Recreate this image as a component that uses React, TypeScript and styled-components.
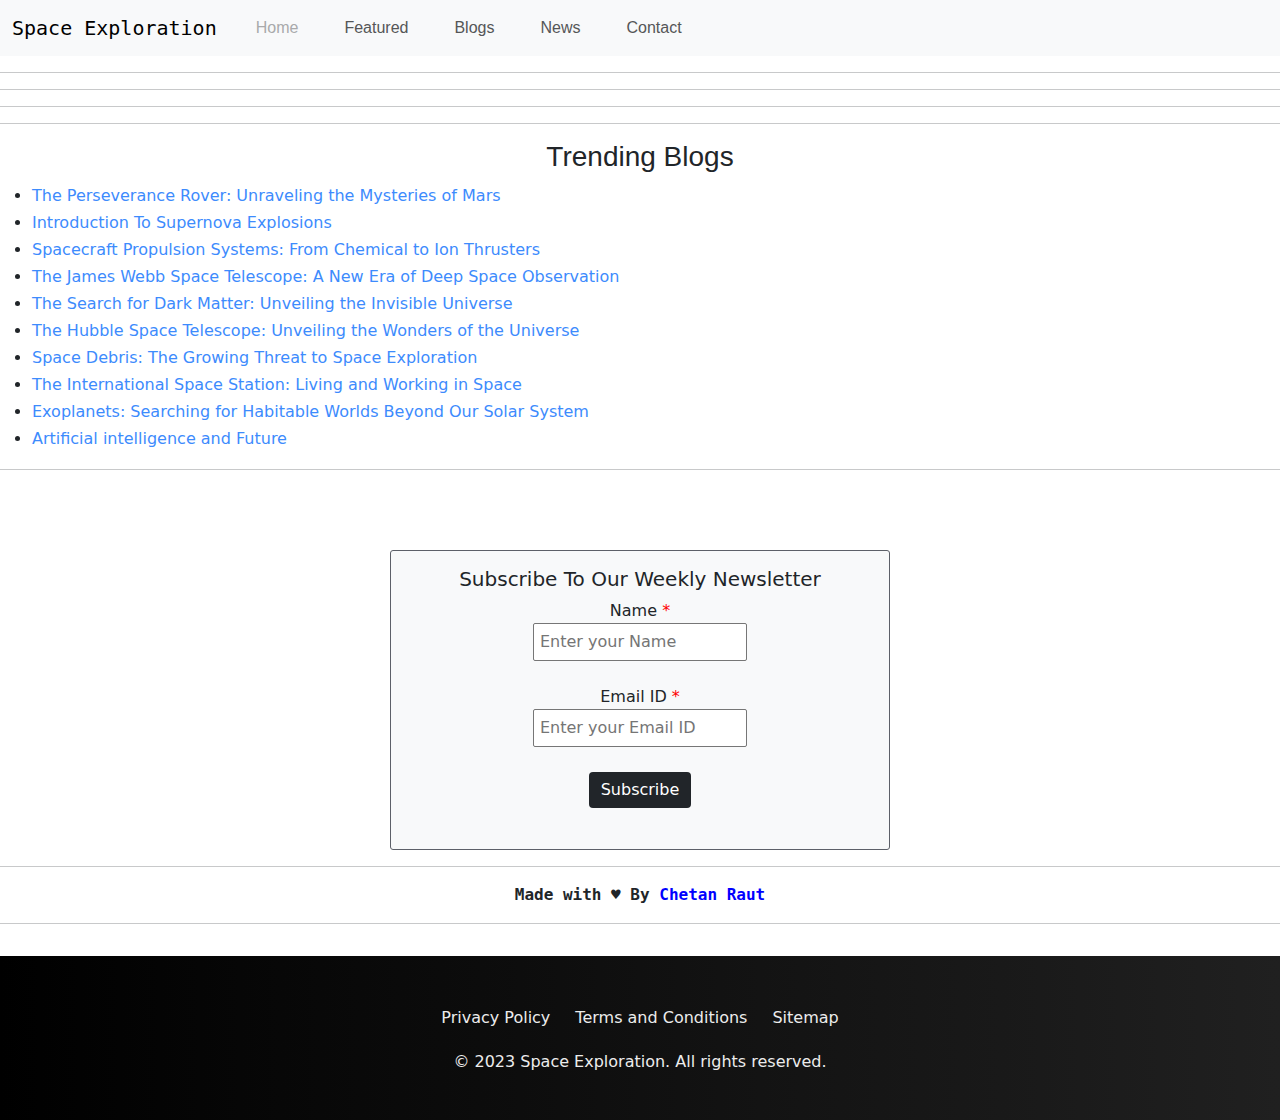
import React from "react";
import styled, { createGlobalStyle } from "styled-components";

const Global = createGlobalStyle`
  * { box-sizing: border-box; }
  html, body { margin: 0; padding: 0; }
  body {
    font-family: "DejaVu Sans", "Noto Sans", sans-serif;
    font-size: 16px;
    line-height: 1.5;
    color: #212529;
    background: #fff;
  }
`;

const NavBar = styled.nav`
  height: 56px;
  background: #f8f9fa;
  display: flex;
  align-items: center;
  padding: 0 12px;
`;

const Brand = styled.a`
  font-family: "DejaVu Sans Mono", monospace;
  font-size: 20px;
  color: #000;
  text-decoration: none;
  margin-right: 16px;
`;

const NavLink = styled.a<{ $active?: boolean }>`
  font-family: "Liberation Sans", Arial, sans-serif;
  font-size: 16px;
  padding: 0 23px;
  color: ${(p) => (p.$active ? "#a9aaab" : "#555657")};
  text-decoration: none;
`;

const Rule = styled.hr`
  margin: 16px 0;
  border: 0;
  border-top: 1px solid #c8c9ca;
  height: 0;
`;

const Title = styled.h2`
  font-family: "Liberation Sans", Arial, sans-serif;
  font-weight: 400;
  font-size: 28px;
  line-height: 1.2;
  text-align: center;
  margin: 0 0 8px;
`;

const BlogList = styled.ul`
  margin: 0;
  padding-left: 32px;
`;

const BlogItem = styled.li`
  line-height: 27.1px;
`;

const BlogLink = styled.a`
  color: #3d8bfd;
  text-decoration: none;
`;

const Box = styled.form`
  width: 500px;
  height: 300px;
  margin: 80px auto 0;
  background: #f8f9fa;
  border: 1px solid #5c6068;
  border-radius: 3px;
  display: flex;
  flex-direction: column;
  align-items: center;
  padding-top: 16px;
`;

const BoxTitle = styled.h4`
  font-size: 20px;
  font-weight: 400;
  line-height: 24px;
  margin: 0 0 8px;
`;

const Label = styled.label<{ $gap?: number }>`
  display: block;
  line-height: 24px;
  margin-top: ${(p) => p.$gap ?? 0}px;
`;

const Star = styled.span`
  color: #ff0000;
`;

const Input = styled.input`
  width: 214px;
  height: 38px;
  border: 1px solid #767676;
  border-radius: 2px;
  padding: 0 6px;
  font-family: "DejaVu Sans", sans-serif;
  font-size: 16px;
  background: #fff;
  &::placeholder { color: #757575; }
`;

const Button = styled.button`
  margin-top: 25px;
  height: 36px;
  padding: 0 12px;
  background: #212529;
  color: #fff;
  border: 0;
  border-radius: 4px;
  font-family: "DejaVu Sans", sans-serif;
  font-size: 16px;
`;

const Credit = styled.p`
  margin: 0;
  text-align: center;
  font-family: "DejaVu Sans Mono", monospace;
  font-weight: 700;
  line-height: 24px;
  padding: 0;
`;

const Author = styled.a`
  color: #0000ff;
  text-decoration: none;
`;

const Footer = styled.footer`
  margin-top: 32px;
  background: linear-gradient(to right, #000000, #202020);
  color: #ececec;
  padding: 50px 0 46px;
  display: flex;
  flex-direction: column;
  align-items: center;
  gap: 20px;
`;

const FooterLinks = styled.div`
  display: flex;
  gap: 25px;
`;

const FooterLink = styled.a`
  color: #ececec;
  text-decoration: none;
`;

const Copy = styled.p`
  margin: 0;
`;

const blogs = [
  "The Perseverance Rover: Unraveling the Mysteries of Mars",
  "Introduction To Supernova Explosions",
  "Spacecraft Propulsion Systems: From Chemical to Ion Thrusters",
  "The James Webb Space Telescope: A New Era of Deep Space Observation",
  "The Search for Dark Matter: Unveiling the Invisible Universe",
  "The Hubble Space Telescope: Unveiling the Wonders of the Universe",
  "Space Debris: The Growing Threat to Space Exploration",
  "The International Space Station: Living and Working in Space",
  "Exoplanets: Searching for Habitable Worlds Beyond Our Solar System",
  "Artificial intelligence and Future",
];

export default function App() {
  return (
    <>
      <Global />
      <NavBar>
        <Brand href="#">Space Exploration</Brand>
        <NavLink $active href="#">Home</NavLink>
        <NavLink href="#">Featured</NavLink>
        <NavLink href="#">Blogs</NavLink>
        <NavLink href="#">News</NavLink>
        <NavLink href="#">Contact</NavLink>
      </NavBar>
      <Rule />
      <Rule />
      <Rule />
      <Rule />
      <Title>Trending Blogs</Title>
      <BlogList>
        {blogs.map((b) => (
          <BlogItem key={b}>
            <BlogLink href="#">{b}</BlogLink>
          </BlogItem>
        ))}
      </BlogList>
      <Rule />
      <Box onSubmit={(e) => e.preventDefault()}>
        <BoxTitle>Subscribe To Our Weekly Newsletter</BoxTitle>
        <Label>
          Name <Star>*</Star>
        </Label>
        <Input type="text" placeholder="Enter your Name" />
        <Label $gap={24}>
          Email ID <Star>*</Star>
        </Label>
        <Input type="email" placeholder="Enter your Email ID" />
        <Button type="submit">Subscribe</Button>
      </Box>
      <Rule />
      <Credit>
        Made with ♥ By <Author href="#">Chetan Raut</Author>
      </Credit>
      <Rule />
      <Footer>
        <FooterLinks>
          <FooterLink href="#">Privacy Policy</FooterLink>
          <FooterLink href="#">Terms and Conditions</FooterLink>
          <FooterLink href="#">Sitemap</FooterLink>
        </FooterLinks>
        <Copy>© 2023 Space Exploration. All rights reserved.</Copy>
      </Footer>
    </>
  );
}
